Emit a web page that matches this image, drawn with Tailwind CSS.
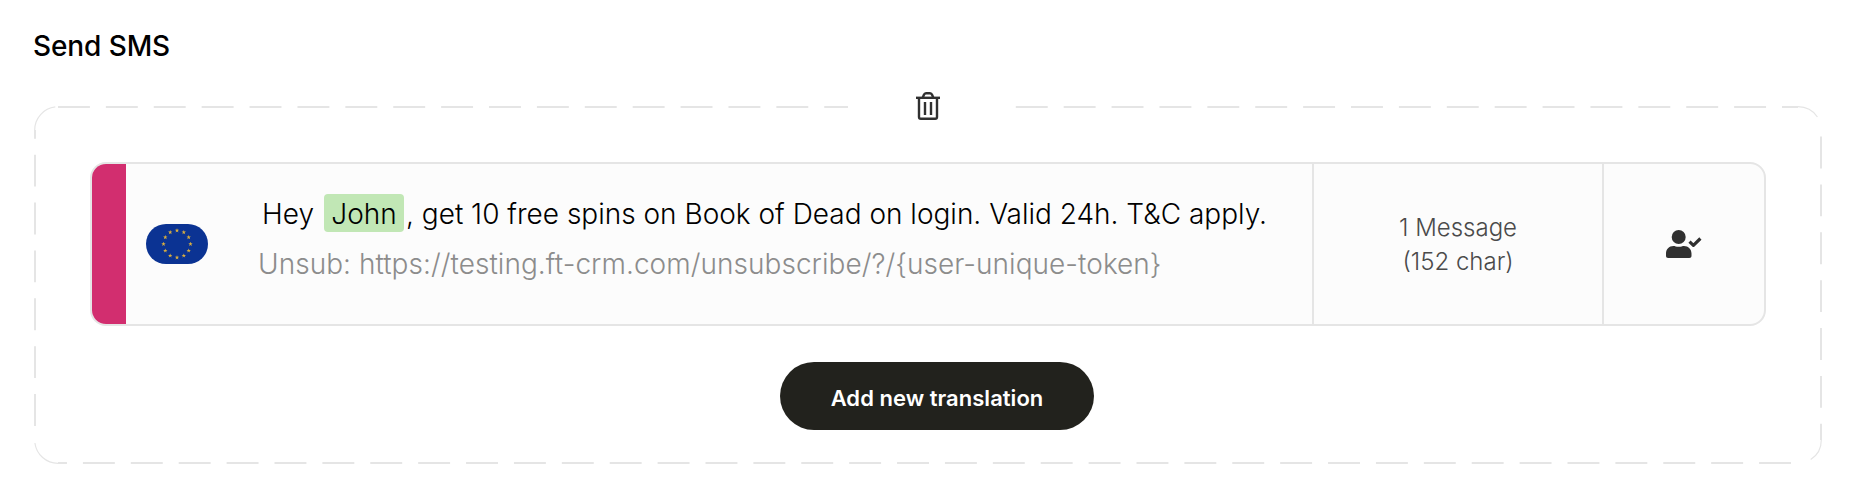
<!DOCTYPE html>
<html lang="en">
<head>
    <meta charset="UTF-8">
    <meta name="viewport" content="width=device-width, initial-scale=1.0">
    <title>Send SMS</title>
    <script src="https://cdn.jsdelivr.net/npm/@tailwindcss/browser@4"></script>
</head>
<body class="bg-white font-['Inter',sans-serif] pl-[33px] pt-[29px]">
    <h1 class="text-[28px] leading-[34px] font-medium text-black h-[77px] tracking-[-0.1px]">Send SMS</h1>

    <section class="relative w-[1788px] h-[358px] ml-px px-14 pt-14">
      <!-- dashed frame -->
      <svg class="absolute inset-0 w-full h-full" viewBox="0 0 1788 358" fill="none" stroke="#e5e5e5">
        <g stroke-width="2" stroke-dasharray="31.92 15.97">
          <path d="M24 1H1764"/>
          <path d="M1787 30.5V334"/>
          <path d="M1764 357H24" stroke-dashoffset="-7"/>
          <path d="M1 334V24" stroke-dashoffset="-14"/>
        </g>
        <g stroke-width="1.2">
          <path d="M.7 24A23.3 23.3 0 0 1 21.3 .9"/>
          <path d="M1764 .7A23.300 23.300 0 0 1 1783.400 11"/>
          <path d="M1787.300 334A23.300 23.300 0 0 1 1776.700 353.600"/>
          <path d="M24 357.300A23.300 23.300 0 0 1 .9 337"/>
        </g>
      </svg>

      <button aria-label="Delete" class="absolute left-[814px] -top-[20px] w-[160px] h-[40px] bg-white flex justify-center">
        <svg class="w-6 h-7 mt-[6px]" viewBox="0 0 24 28" fill="none" stroke="#303030" stroke-width="2.4">
          <path d="M0 5.800h24"/>
          <path d="M6.800 5.500l1-2.500C8.300 1.700 9 1.200 10 1.200h4c1 0 1.700.5 2.200 1.800l1 2.500"/>
          <path d="M3 6v19c0 1.200.600 1.800 1.800 1.800h14.400c1.200 0 1.800-.600 1.800-1.800V6"/>
          <path d="M9 10v13M15 10v13"/>
        </svg>
      </button>

      <div class="relative flex h-[164px] border-2 border-[#e5e5e5] rounded-2xl bg-[#fcfcfc] overflow-hidden">
        <div class="w-[34px] bg-[#d22e6f]"></div>
        <div class="w-[102px] pl-5 flex items-center">
          <svg class="w-[62px] h-10" viewBox="-31 -20 62 40">
            <defs>
              <path id="star" fill="#d9ae3f" d="M0-2.300.600-.700 2.200-.700.900.300 1.400 1.900 0 .900-1.400 1.900-.900.300-2.200-.700-.600-.700z"/>
            </defs>
            <rect x="-31" y="-20" width="62" height="40" rx="20" fill="#0b3393"/>
            <use href="#star" x="0" y="-13.500"/>
            <use href="#star" x="6.800" y="-11.700"/>
            <use href="#star" x="11.700" y="-6.700"/>
            <use href="#star" x="13.500" y="0"/>
            <use href="#star" x="11.700" y="6.700"/>
            <use href="#star" x="6.800" y="11.700"/>
            <use href="#star" x="0" y="13.500"/>
            <use href="#star" x="-6.800" y="11.700"/>
            <use href="#star" x="-11.700" y="6.700"/>
            <use href="#star" x="-13.500" y="0"/>
            <use href="#star" x="-11.700" y="-6.700"/>
            <use href="#star" x="-6.800" y="-11.700"/>
          </svg>
        </div>
        <div class="flex-1 pt-[30px] pl-[31px] whitespace-nowrap font-light text-[28px]">
          <p class="flex h-[38px] leading-[40px] pl-[3px] text-black">
            <span class="w-[62px]">Hey</span>
            <span class="w-20 h-[38px] text-center rounded-[4px] bg-[#c1e7b5]">John</span>
            <span class="pl-[2px]">, get 10 free spins on Book of Dead on login. Valid 24h. T&amp;C apply.</span>
          </p>
          <p class="mt-3 h-[38px] leading-[40px] -ml-px text-[#8c8c8c] tracking-[0.04px]">Unsub: https://testing.ft-crm.com/unsubscribe/?/{user-unique-token}</p>
        </div>
        <div class="w-[292px] pt-px border-x-2 border-[#e5e5e5] flex items-center justify-center text-center text-2xl leading-[34px] font-light text-[#4a4a4a]">
          <p>1 Message<br>(152 char)</p>
        </div>
        <div class="w-[160px] flex items-center justify-center">
          <svg class="w-9 h-7" viewBox="0 0 36 28" fill="#303030">
            <circle cx="12.700" cy="7" r="7"/>
            <path d="M7.500 16c1.400 0 2.600.800 5.200.800s3.800-.800 5.200-.800c4.500 0 7.600 3.200 7.600 7.600v2.200c0 1.400-.800 2.200-2.200 2.200H2.200C.800 28 0 27.200 0 25.800v-2.200C0 19.200 3 16 7.500 16z"/>
            <path d="M23.500 11.600l3.900 3.700 7-6.800" fill="none" stroke="#303030" stroke-width="3.200" stroke-linejoin="round"/>
          </svg>
        </div>
      </div>

      <div class="relative flex justify-center pt-9 pl-[18px]">
        <button class="w-[314px] h-[68px] rounded-full bg-[#22221d] text-white text-[22px] font-semibold pt-1 tracking-[0.03px]">Add new translation</button>
      </div>
    </section>
</body>
</html>
